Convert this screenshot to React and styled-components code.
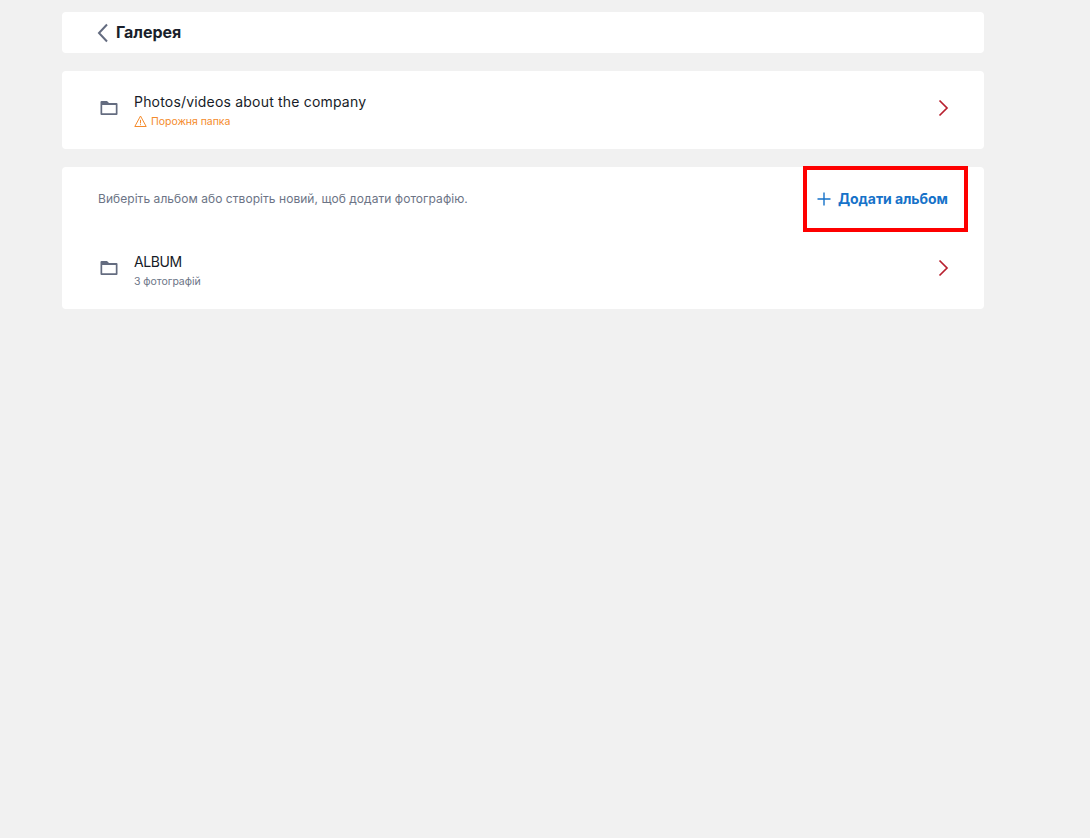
import React from "react";
import styled, { createGlobalStyle } from "styled-components";

const Global = createGlobalStyle`
  html, body { margin: 0; padding: 0; background: #f1f1f1; }
  body { font-family: Inter, "Noto Sans", sans-serif; min-height: 838px; overflow: hidden; }
`;
const Page = styled.main`
  width: 922px;
  margin-left: 62px;
  padding-top: 12px;
  display: flex;
  flex-direction: column;
  gap: 18px;
`;
const Card = styled.section`
  background: #fff;
  border-radius: 4px;
`;
const Header = styled(Card)`
  height: 41px;
  display: flex;
  align-items: center;
  padding-left: 34px;
  gap: 2px;
`;
const Title = styled.h1`
  margin: 0 0 2px;
  font-size: 16px;
  font-weight: 700;
  letter-spacing: -0.05px;
  color: #1a1f2b;
`;
const Row = styled.div`
  height: 78px;
  display: flex;
  align-items: center;
  padding: 0 32px 0 36px;
`;
const FolderSlot = styled.div`
  width: 35px;
  margin: 0 0 5px 1px;
  display: flex;
  align-items: center;
  flex: none;
`;
const RowText = styled.div`
  flex: 1;
  display: flex;
  flex-direction: column;
  gap: 3px;
  padding-top: 2px;
`;
const Name = styled.div`
  font-size: 14px;
  line-height: 18px;
  letter-spacing: ${(p) => p.$spacing};
  color: #171c28;
`;
const Meta = styled.div`
  display: flex;
  align-items: center;
  gap: 4px;
  font-size: 10.5px;
  line-height: 15px;
  letter-spacing: -0.05px;
  color: ${(p) => p.$color};
`;
const ChevronSlot = styled.div`
  display: flex;
  flex: none;
  margin-bottom: 4px;
`;
const Toolbar = styled.div`
  height: 64px;
  display: flex;
  align-items: center;
  justify-content: space-between;
  padding: 0 16px 0 36px;
`;
const Hint = styled.p`
  margin: 0 0 2px;
  font-size: 12px;
  letter-spacing: 0.05px;
  color: #6c7486;
`;
const AddButton = styled.button`
  flex: none;
  box-sizing: border-box;
  width: 165px;
  height: 66px;
  display: flex;
  align-items: center;
  gap: 7px;
  border: 4px solid #fe0000;
  padding: 0 0 0 10px;
  background: none;
  font: 700 14px Inter, "Noto Sans", sans-serif;
  letter-spacing: -0.08px;
  color: #1672c9;
  white-space: nowrap;
`;
const ButtonLabel = styled.span`
  margin-bottom: 2px;
`;
const ChevronIcon = styled.svg`
  flex: none;
  fill: none;
`;
const Back = () => (
  <ChevronIcon width="18" height="20" viewBox="0 0 18 20" stroke="#646c80" strokeWidth="2">
    <path d="M11 1.5 3 10l8 8.5" />
  </ChevronIcon>
);
const Forward = () => (
  <ChevronIcon width="18" height="18" viewBox="0 0 18 18" stroke="#b8202f" strokeWidth="1.7">
    <path d="M5.5 1.5 13 9l-7.5 7.5" />
  </ChevronIcon>
);
const Folder = () => (
  <svg width="20" height="20" viewBox="0 0 20 20" fill="#646c80">
    <path
      fillRule="evenodd"
      d="M2.5 3H8l2 2h7.5a1 1 0 0 1 1 1v10a1 1 0 0 1-1 1h-15a1 1 0 0 1-1-1V4a1 1 0 0 1 1-1ZM3.2 7v8.3h13.6V7Z"
    />
  </svg>
);
const Warning = () => (
  <svg width="13" height="13" viewBox="0 0 13 13" fill="none" stroke="#f48b2c" strokeWidth="1" strokeLinejoin="round">
    <path d="M6.5 1 .8 11.5h11.4L6.5 1ZM6.5 4.8v3.6M6.5 9.2v1" />
  </svg>
);
const Plus = () => (
  <svg width="14" height="14" viewBox="0 0 14 14" fill="none" stroke="#1672c9" strokeWidth="1.4">
    <path d="M7 .5v13M.5 7h13" />
  </svg>
);

export default function App() {
  return (
    <>
      <Global />
      <Page>
        <Header>
          <Back />
          <Title>Галерея</Title>
        </Header>
        <Card>
          <Row>
            <FolderSlot><Folder /></FolderSlot>
            <RowText>
              <Name $spacing="0.19px">Photos/videos about the company</Name>
              <Meta $color="#f48b2c"><Warning />Порожня папка</Meta>
            </RowText>
            <ChevronSlot><Forward /></ChevronSlot>
          </Row>
        </Card>
        <Card>
          <Toolbar>
            <Hint>Виберіть альбом або створіть новий, щоб додати фотографію.</Hint>
            <AddButton><Plus /><ButtonLabel>Додати альбом</ButtonLabel></AddButton>
          </Toolbar>
          <Row>
            <FolderSlot><Folder /></FolderSlot>
            <RowText>
              <Name $spacing="-0.4px">ALBUM</Name>
              <Meta $color="#6c7486">3 фотографій</Meta>
            </RowText>
            <ChevronSlot><Forward /></ChevronSlot>
          </Row>
        </Card>
      </Page>
    </>
  );
}
